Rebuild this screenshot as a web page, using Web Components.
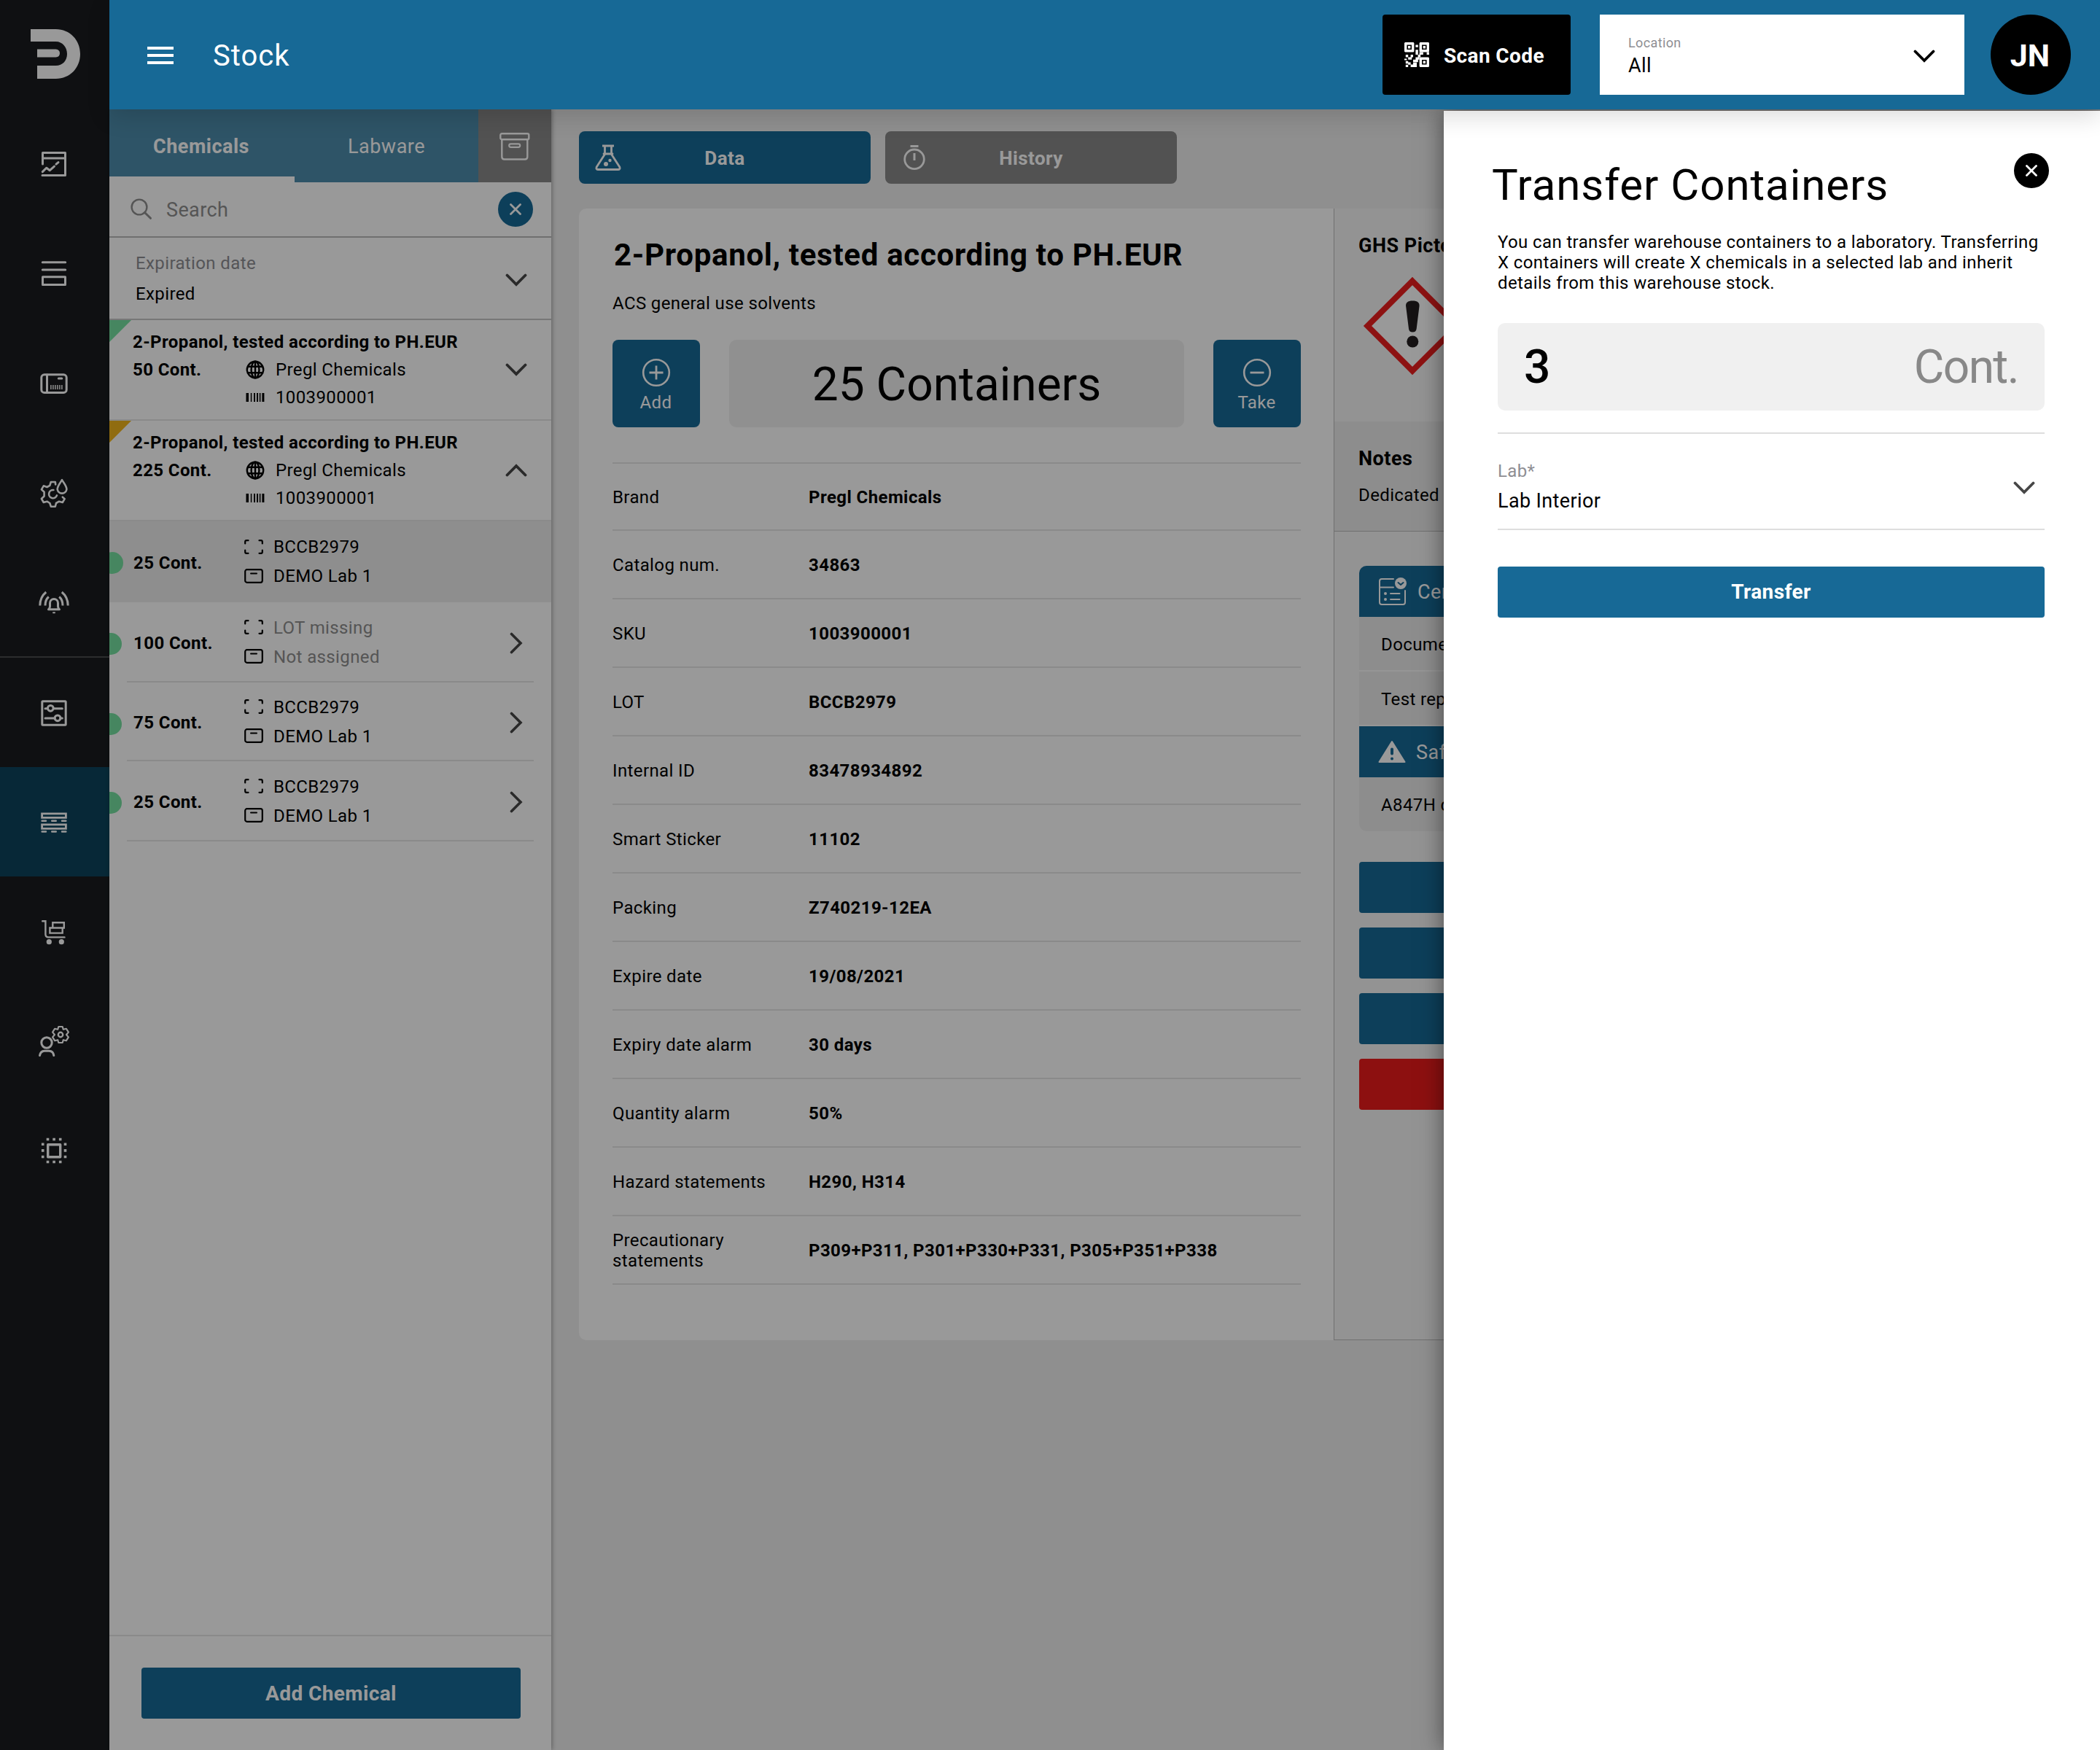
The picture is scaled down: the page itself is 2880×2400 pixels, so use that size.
<!DOCTYPE html>
<html lang="en">
<head>
<meta charset="utf-8">
<title>Stock</title>
<style>
   html, body {
      margin: 0;
      height: 100%;
   }
   body {
      --blue: #176996;
      --grey: #898989;
      --muted: #8e8e8e;
      --line: #e6e6e6;
      font-family: Roboto, "Liberation Sans", sans-serif;
      font-size: 24px;
      letter-spacing: 0.38px;
      color: #000;
      overflow: hidden;
   }
</style>
</head>
<body>
<stock-app></stock-app>

<script>
const ICONS = {
   logo: [68, 68, `<path fill="currentColor" stroke="none" d="M0 0H34.5C54 0 68 15 68 34S54 68 34.5 68H9V50H34.5C44 50 50 43 50 34S44 17 34.5 17H0zM9 27.5H34.5Q40 28 40 33T34.5 38.5H9z"/>`],
   report: [48, 48, `<path d="M8.5 24V8.5H39.5V39.5H8M8.5 16H39.5M8.3 34.6L13.7 29.2L18.3 32.7L24.5 27.2M27 24.2L30 21.7"/>`],
   rows: [48, 48, `<path d="M8.3 8.7H39.7M8.3 19H39.7M8.5 28.8H39.5V39.5H8.5z"/>`],
   card: [48, 48, `<rect x="6.8" y="12.8" width="34.4" height="24.6" rx="4"/><path d="M14.5 13V37M30.3 18H34.8"/><path stroke-linecap="butt" stroke-width="6" stroke-dasharray="1.4 1.6" d="M19.2 30H36"/>`],
   gearDrop: [48, 48, `<path stroke-width="2.6" d="M26.2 13.5L25.8 10H19.8L18.3 14.8L14.5 17L9.8 15.3L6.9 20.3L10.6 23.8V29.5L6.9 33L9.8 38L14.5 36.7L18.3 39L19.8 43.7H25.8L27 39L31 36.7L35.8 38L38.7 33.2L35.8 30.7M23.4 21A5.6 5.6 0 1 0 28 28.4M35 7.2C33 11 28.7 15.5 28.7 20A6.4 6.4 0 0 0 41.4 20C41.4 15.5 37 11 35 7.2z"/>`],
   bell: [48, 48, `<path stroke-linecap="butt" d="M16.5 34.8Q18.5 33.5 18.5 30.5V26a5.5 5.5 0 0 1 11 0V30.5Q29.5 33.5 31.5 34.8zM13.2 11Q4.8 18 4.8 29.5M16.8 17.5Q12 21.5 12 29.5M34.8 11Q43.2 18 43.2 29.5M31.2 17.5Q36 21.5 36 29.5"/><path stroke-width="2" d="M23 39.3H25"/>`],
   sliders: [48, 48, `<rect x="7.8" y="8.8" width="32.4" height="32.4" rx="1"/><path d="M12 18.7H15M23.5 18.7H35.3M12 32H25M33 32H35.3"/><circle cx="19.3" cy="18.3" r="3.9"/><circle cx="29" cy="31.8" r="3.9"/>`],
   pallets: [48, 48, `<path stroke-linejoin="miter" stroke-width="2.8" d="M7.6 12.8H40.4V18.4H7.6zM7.6 27.8H40.4V33.4H7.6z"/><path stroke-width="2.4" d="M7.6 22.7H13M21.2 22.7H26.8M35 22.7H40.4M7.6 37.5H13M21.2 37.5H26.8M35 37.5H40.4"/>`],
   cart: [48, 48, `<path stroke-width="2.4" stroke-linejoin="miter" d="M8.2 10.2H12.4V28.5Q12.6 32.3 16.5 32.4H38.5M22.3 18.8V12.3H37.8V19.5H36.5M18.4 19.5H35.7V26.6H18.4z"/><circle cx="17.3" cy="38.7" r="3.6" fill="currentColor" stroke="none"/><circle cx="34.3" cy="38.7" r="3.6" fill="currentColor" stroke="none"/>`],
   userGear: [48, 48, `<circle cx="14" cy="27" r="7.2"/><path d="M4.5 44.5Q5.5 38.5 11 38.2H17.3Q23 38.5 23.8 44.5"/><circle cx="33" cy="16" r="3.2" stroke-width="2.4"/><path stroke-width="2.2" d="M30.3 5H35.7L36.8 8.8L40.9 7.8L43.9 12.6L41 16L43.9 19.4L40.9 24.2L36.8 23.2L35.7 27H30.3L29.2 23.2L25.1 24.2L22.1 19.4L25 16L22.1 12.6L25.1 7.8L29.2 8.8z"/>`],
   chip: [48, 48, `<rect x="15.7" y="16.7" width="17" height="17" stroke-width="3.4"/><path stroke-width="3.6" stroke-linecap="butt" stroke-dasharray="3.6 5" d="M13.7 9.5H36M13.7 40.5H36M8.7 14.5V37M39.5 14.5V37"/>`],
   menu: [36, 24, `<path stroke-width="4" stroke-linecap="butt" d="M0 2H36M0 12H36M0 22H36"/>`],
   qr: [34, 34, `<g fill="currentColor" stroke="none"><path fill-rule="evenodd" d="M1 0H12.4L13.4 1V12.4L12.4 13.4H1L0 12.4V1zM3.4 3.4V10H10V3.4zM5 5H8.4V8.4H5zM21.6 0H33L34 1V12.4L33 13.4H21.6L20.6 12.4V1zM24 3.4V10H30.6V3.4zM25.6 5H29V8.4H25.6zM21.6 20.6H33L34 21.6V33L33 34H21.6L20.6 33V21.6zM24 24V30.6H30.6V24zM25.6 25.6H29V29H25.6z"/><path d="M15.4 3.4h3.4v3.4h-3.4zM15.4 10.2h3.4v6.8h-3.4zM20.6 13.6h5.2v3.4h-5.2zM30.6 13.4h3.4v3.6h-3.4zM1.8 17h3.4v3.4h-3.4zM8.6 17h3.4v3.4h-3.4zM5.2 20.4h5v3.4h-5zM0 22.6h3.4v2h-3.4zM15.4 20.4h5.2v3.4h-1.8v3.4h-3.4zM12 23.8h3.4v3.4h-3.4zM18.6 17h3.6v3.6h-3.6zM1.8 25.8h3.4v3.4h-3.4zM5.2 27.4h3.4v3.4h-3.4zM1.8 30.8h3.4v3.2h-3.4zM8.6 30.6h3.4v-2.8h5v6.2h-8.4z"/></g>`],
   archive: [42, 38, `<rect x="1.3" y="1.3" width="39" height="8" rx="2" stroke-width="2.4"/><path stroke-width="2.4" d="M3.3 9.5V33Q3.3 36.5 6.8 36.5H34.8Q38.3 36.5 38.3 33V9.5"/><rect x="13.2" y="15.3" width="15" height="4.6" rx="2.3" stroke-width="2.2"/>`],
   search: [30, 30, `<circle cx="12" cy="12" r="10.4" stroke-width="2.4"/><path stroke-width="3" d="M19.5 19.5L27.5 27.3"/>`],
   close: [16, 16, `<path stroke-width="2.8" d="M1.5 1.5L14.5 14.5M14.5 1.5L1.5 14.5"/>`],
   down: [30, 18, `<path stroke-width="3.8" stroke-linejoin="miter" d="M2.5 2.5L15 15L27.5 2.5"/>`],
   up: [30, 18, `<path stroke-width="3.8" stroke-linejoin="miter" d="M2.5 15.5L15 3L27.5 15.5"/>`],
   right: [18, 30, `<path stroke-width="3.6" stroke-linejoin="miter" d="M2.5 2.5L15 15L2.5 27.5"/>`],
   globe: [26, 26, `<g stroke-width="2.4"><circle cx="13" cy="13" r="11.2"/><ellipse cx="13" cy="13" rx="5.4" ry="11.2"/><path d="M13 2V24M3.5 8.8H22.5M3.5 17.2H22.5"/></g>`],
   barcode: [26, 12, `<path stroke="none" fill="currentColor" d="M.5 0h3.5v12H.5zM6.8 0h1.5v12H6.8zM11 0h2v12h-2zM15 0h2v12h-2zM18.8 0h1.6v12h-1.6zM22.4 0h3v12h-3z"/>`],
   lot: [26, 20, `<path stroke-width="2.2" d="M1.2 5.5V3Q1.2 1.2 3 1.2H5.5M20.5 1.2H23Q24.8 1.2 24.8 3V5.5M24.8 14.5V17Q24.8 18.8 23 18.8H20.5M5.5 18.8H3Q1.2 18.8 1.2 17V14.5"/>`],
   box: [26, 20, `<rect x="1.2" y="1.2" width="23.6" height="17.6" rx="2.5" stroke-width="2.2"/><path stroke-width="2" d="M9 6.5H17"/>`],
   flask: [36, 36, `<path stroke-width="3" stroke-linecap="butt" stroke-linejoin="miter" d="M10 2H26"/><path stroke-width="2.8" d="M13.5 3V13.5L2.2 31Q1 34.5 4.5 34.5H31.5Q35 34.5 33.8 31L22.5 13.5V3M12 13H24"/><circle cx="15" cy="27" r="3" fill="currentColor" stroke="none"/><circle cx="20.5" cy="22" r="2.2" fill="currentColor" stroke="none"/>`],
   timer: [30, 34, `<circle cx="15" cy="19.3" r="13.3" stroke-width="2.8"/><path stroke-width="3" stroke-linecap="butt" d="M9.5 1.5H20.5M15 11V21"/>`],
   plus: [40, 40, `<circle cx="20" cy="20" r="17.8" stroke-width="2.6"/><path stroke-width="2.8" stroke-linecap="butt" d="M20 10.5V29.5M10.5 20H29.5"/>`],
   minus: [40, 40, `<circle cx="20" cy="20" r="17.8" stroke-width="2.6"/><path stroke-width="2.8" stroke-linecap="butt" d="M10.5 20H29.5"/>`],
   irritant: [136, 136, `<path d="M68 6.5L129.5 68L68 129.5L6.5 68z" fill="#fff" stroke="#eb1e1e" stroke-width="8" stroke-linejoin="miter"/><path fill="#231f20" stroke="none" d="M68.3 33.5C75 33.5 78 36 77.5 41L73.6 72Q73 76.5 68.3 76.5T63 72L59.1 41C58.6 36 61.6 33.5 68.3 33.5z"/><circle cx="68.3" cy="89.5" r="8" fill="#231f20" stroke="none"/>`],
   certificate: [40, 40, `<g stroke-width="2"><path d="M21 3H5Q2 3 2 6V35Q2 38 5 38H34Q37 38 37 35V19M2 14.5H21M17 23H29.5M17 31H29.5"/></g><g fill="currentColor" stroke="none"><circle cx="10" cy="23" r="2"/><circle cx="10" cy="31" r="2"/><circle cx="31" cy="9" r="8"/></g><path d="M27.5 8L31 11L34.5 8" stroke="var(--blue)" stroke-width="2"/>`],
   warning: [38, 32, `<path fill="currentColor" stroke="currentColor" stroke-width="2" d="M19 2L36.5 30H1.5z"/><path stroke="var(--blue)" stroke-width="4" d="M19 12.5V18.5M19 25.5V25.6"/>`]
}

class AppIcon extends HTMLElement {
   connectedCallback() {
      const [w, h, body] = ICONS[this.getAttribute('name')]
      this.attachShadow({ mode: 'open' })
      this.shadowRoot.innerHTML = `
         <style>
            :host { display: block; flex: none; width: ${w}px; height: ${h}px; }
            svg { display: block; }
         </style>
         <svg width="${w}" height="${h}" viewBox="0 0 ${w} ${h}" fill="none" stroke="currentColor"
            stroke-width="3" stroke-linecap="round" stroke-linejoin="round">${body}</svg>
         `;
   }
}
customElements.define('app-icon', AppIcon)

class RoundButton extends HTMLElement {
   constructor() {
      super();
      this.attachShadow({ mode: 'open' })
      this.shadowRoot.innerHTML = `
         <style>
            :host {
               display: flex;
               align-items: center;
               justify-content: center;
               flex: none;
               width: 48px;
               height: 48px;
               border-radius: 50%;
               background: var(--blue);
               color: #fff;
            }
         </style>
         <app-icon name="close"></app-icon>
         `;
   }
}
customElements.define('round-button', RoundButton)

class AppButton extends HTMLElement {
   constructor() {
      super();
      this.attachShadow({ mode: 'open' })
      this.shadowRoot.innerHTML = `
         <style>
            :host {
               display: flex;
               align-items: center;
               justify-content: center;
               box-sizing: border-box;
               height: 70px;
               border-radius: 4px;
               background: var(--blue);
               color: #fff;
               font-size: 28px;
               font-weight: 700;
               letter-spacing: 0.4px;
            }
            :host([danger]) { background: #eb1b1b; }
         </style>
         <slot></slot>
         `;
   }
}
customElements.define('app-button', AppButton)

class AppSidebar extends HTMLElement {
   constructor() {
      super();
      const link = (name) => `<a class="${name === 'pallets' ? 'active' : ''}"><app-icon name="${name}"></app-icon></a>`
      this.attachShadow({ mode: 'open' })
      this.shadowRoot.innerHTML = `
         <style>
            :host {
               display: block;
               background: #191c1f;
               color: #fff;
            }
            .logo {
               box-sizing: border-box;
               height: 150px;
               padding: 40px 0 0 42px;
            }
            a {
               display: flex;
               align-items: center;
               justify-content: center;
               height: 150px;
               padding-right: 2px;
            }
            a.active { background: #0c445c; }
            nav + nav { border-top: 2px solid #4a4c4e; }
         </style>
         <div class="logo"><app-icon name="logo"></app-icon></div>
         <nav>${['report', 'rows', 'card', 'gearDrop', 'bell'].map(link).join('')}</nav>
         <nav>${['sliders', 'pallets', 'cart', 'userGear', 'chip'].map(link).join('')}</nav>
         `;
   }
}
customElements.define('app-sidebar', AppSidebar)

class AppTopbar extends HTMLElement {
   constructor() {
      super();
      this.attachShadow({ mode: 'open' })
      this.shadowRoot.innerHTML = `
         <style>
            :host {
               display: flex;
               align-items: center;
               box-sizing: border-box;
               height: 150px;
               padding: 0 40px 0 52px;
               background: var(--blue);
               color: #fff;
               box-shadow: 0 10px 30px rgba(0, 0, 0, 0.14);
            }
            app-icon[name="menu"] { margin-top: 2px; }
            h1 {
               flex: 1;
               margin: 2px 0 0 54px;
               font-size: 40px;
               font-weight: 400;
               letter-spacing: 1px;
            }
            .scan {
               display: flex;
               align-items: center;
               box-sizing: border-box;
               width: 258px;
               height: 110px;
               padding-left: 30px;
               gap: 20px;
               border-radius: 4px;
               background: #000;
               font-size: 28px;
               font-weight: 700;
            }
            .scan span { padding-top: 2px; }
            .location {
               display: flex;
               align-items: center;
               justify-content: space-between;
               box-sizing: border-box;
               width: 500px;
               height: 110px;
               margin: 0 36px 0 40px;
               padding: 0 40px 0 39px;
               background: #fff;
               color: #000;
               font-size: 27px;
               line-height: 32px;
            }
            small {
               display: block;
               padding-bottom: 1px;
               font-size: 18px;
               line-height: 29px;
               color: #8e8e93;
            }
            .location app-icon { margin-top: 4px; }
            .avatar {
               display: flex;
               align-items: center;
               justify-content: center;
               box-sizing: border-box;
               width: 110px;
               height: 110px;
               padding: 2px 2px 0 0;
               border-radius: 50%;
               background: #000;
               font-size: 43px;
               font-weight: 700;
               letter-spacing: 0;
            }
         </style>
         <app-icon name="menu"></app-icon>
         <h1>Stock</h1>
         <div class="scan"><app-icon name="qr"></app-icon><span>Scan Code</span></div>
         <div class="location">
            <div><small>Location</small>All</div>
            <app-icon name="down"></app-icon>
         </div>
         <div class="avatar">JN</div>
         `;
   }
}
customElements.define('app-topbar', AppTopbar)

class StockItem extends HTMLElement {
   connectedCallback() {
      this.attachShadow({ mode: 'open' })
      this.shadowRoot.innerHTML = `
         <style>
            :host {
               display: grid;
               grid-template-columns: 155px 41px 1fr 30px;
               grid-auto-rows: 38px;
               align-items: center;
               box-sizing: border-box;
               height: 138px;
               padding: 11px 33px 11px 32px;
               border-bottom: 2px solid var(--line);
               background: linear-gradient(135deg, var(--flag) 21px, transparent 21.5px);
            }
            .name { grid-column: 1 / 5; letter-spacing: 0.41px; }
            .id { grid-column: 3; }
            .code { grid-column: 2; }
            .arrow { color: #474747; }
         </style>
         <b class="name"><slot></slot></b>
         <b>${this.getAttribute('amount')}</b>
         <app-icon name="globe"></app-icon>
         <span>Pregl Chemicals</span>
         <app-icon class="arrow" name="${this.hasAttribute('open') ? 'up' : 'down'}"></app-icon>
         <app-icon class="code" name="barcode"></app-icon>
         <span class="id">1003900001</span>
         `;
      this.style.setProperty('--flag', this.getAttribute('flag'))
   }
}
customElements.define('stock-item', StockItem)

class StockBatch extends HTMLElement {
   connectedCallback() {
      this.attachShadow({ mode: 'open' })
      this.shadowRoot.innerHTML = `
         <style>
            :host {
               display: block;
               position: relative;
               overflow: hidden;
               height: 110px;
            }
            :host([selected]) { background: #ededed; height: 111px; }
            :host([short]) { height: 108px; }
            :host::before {
               content: '';
               position: absolute;
               left: -13px;
               top: 42px;
               width: 30px;
               height: 30px;
               border-radius: 50%;
               background: #76dfa0;
            }
            :host([selected])::before { left: -11px; }
            .row {
               display: grid;
               grid-template-columns: 152px 40px 1fr 24px;
               align-items: center;
               box-sizing: border-box;
               height: 100%;
               margin: 0 24px;
               padding: 0 9px 0 9px;
               border-bottom: 2px solid var(--line);
            }
            :host([selected]) .row { border-color: transparent; }
            b { padding-top: 4px; letter-spacing: 0.42px; }
            .cell {
               display: grid;
               grid-auto-rows: 40px;
               align-items: center;
            }
            .text { padding-top: 1px; }
            :host([empty]) .text { color: var(--muted); }
            .arrow { color: #474747; margin-top: 4px; }
         </style>
         <div class="row">
            <b>${this.getAttribute('amount')}</b>
            <div class="cell"><app-icon name="lot"></app-icon><app-icon name="box"></app-icon></div>
            <div class="cell text">
               <span>${this.getAttribute('lot')}</span>
               <span>${this.getAttribute('place')}</span>
            </div>
            ${this.hasAttribute('selected') ? '' : '<app-icon class="arrow" name="right"></app-icon>'}
         </div>
         `;
   }
}
customElements.define('stock-batch', StockBatch)

class StockList extends HTMLElement {
   constructor() {
      super();
      this.attachShadow({ mode: 'open' })
      this.shadowRoot.innerHTML = `
         <style>
            :host {
               display: flex;
               flex-direction: column;
               position: relative;
               background: #fff;
               box-shadow: 1px 0 6px rgba(0, 0, 0, 0.35);
            }
            .tabs {
               display: grid;
               grid-template-columns: 254px 252px 100px;
               height: 100px;
               color: #fff;
               font-size: 27px;
               letter-spacing: 0.5px;
            }
            .tabs div {
               display: flex;
               align-items: center;
               justify-content: center;
               box-sizing: border-box;
               padding-top: 2px;
               background: #4e8cac;
            }
            .tabs .current {
               padding: 9px 2px 0 0;
               border-bottom: 8px solid #fff;
               font-weight: 700;
            }
            .tabs .archive { background: var(--grey); }
            .search {
               display: flex;
               align-items: center;
               box-sizing: border-box;
               height: 76px;
               padding: 0 25px 0 29px;
               border-bottom: 2px solid #bbb;
               color: var(--muted);
               font-size: 27px;
            }
            .search span { flex: 1; margin: 2px 0 0 19px; }
            .filter {
               display: flex;
               align-items: center;
               justify-content: space-between;
               box-sizing: border-box;
               height: 113px;
               padding: 0 33px 0 36px;
               border-bottom: 2px solid #c6c6c6;
               line-height: 42px;
            }
            .filter small { display: block; font-size: 24px; color: #8e8e93; }
            .filter app-icon { color: #474747; margin-top: 4px; }
            footer {
               margin-top: auto;
               padding: 43px 42px 43px 44px;
               border-top: 2px solid var(--line);
            }
         </style>
         <div class="tabs">
            <div class="current">Chemicals</div>
            <div>Labware</div>
            <div class="archive"><app-icon name="archive"></app-icon></div>
         </div>
         <div class="search"><app-icon name="search"></app-icon><span>Search</span><round-button></round-button></div>
         <div class="filter">
            <div><small>Expiration date</small>Expired</div>
            <app-icon name="down"></app-icon>
         </div>
         <stock-item flag="#76dfa0" amount="50 Cont.">2-Propanol, tested according to PH.EUR</stock-item>
         <stock-item flag="#f0b51c" amount="225 Cont." open>2-Propanol, tested according to PH.EUR</stock-item>
         <stock-batch amount="25 Cont." lot="BCCB2979" place="DEMO Lab 1" selected></stock-batch>
         <stock-batch amount="100 Cont." lot="LOT missing" place="Not assigned" empty></stock-batch>
         <stock-batch amount="75 Cont." lot="BCCB2979" place="DEMO Lab 1" short></stock-batch>
         <stock-batch amount="25 Cont." lot="BCCB2979" place="DEMO Lab 1"></stock-batch>
         <footer><app-button>Add Chemical</app-button></footer>
         `;
   }
}
customElements.define('stock-list', StockList)

class ViewTab extends HTMLElement {
   connectedCallback() {
      this.attachShadow({ mode: 'open' })
      this.shadowRoot.innerHTML = `
         <style>
            :host {
               display: grid;
               grid-template-columns: 60px 1fr 60px;
               align-items: center;
               width: 400px;
               height: 72px;
               border-radius: 8px;
               background: var(--grey);
               color: #fff;
               font-size: 26px;
               font-weight: 700;
               text-align: center;
               letter-spacing: 0.45px;
            }
            :host([current]) { background: var(--blue); }
            app-icon { justify-self: center; margin-left: 20px; }
            span { padding-top: 1px; }
         </style>
         <app-icon name="${this.getAttribute('icon')}"></app-icon>
         <span><slot></slot></span>
         `;
   }
}
customElements.define('view-tab', ViewTab)

class AmountButton extends HTMLElement {
   connectedCallback() {
      this.attachShadow({ mode: 'open' })
      this.shadowRoot.innerHTML = `
         <style>
            :host {
               display: flex;
               flex-direction: column;
               align-items: center;
               box-sizing: border-box;
               width: 120px;
               height: 120px;
               padding: 25px 1px 0 0;
               border-radius: 8px;
               background: var(--blue);
               color: #fff;
               line-height: 42px;
            }
         </style>
         <app-icon name="${this.getAttribute('icon')}"></app-icon>
         <slot></slot>
         `;
   }
}
customElements.define('amount-button', AmountButton)

class DataRow extends HTMLElement {
   connectedCallback() {
      this.attachShadow({ mode: 'open' })
      this.shadowRoot.innerHTML = `
         <style>
            :host {
               display: grid;
               grid-template-columns: 269px 1fr;
               align-items: center;
               box-sizing: border-box;
               height: 94px;
               padding-top: 2px;
               border-bottom: 2px solid var(--line);
               line-height: 28px;
            }
            span { max-width: 230px; }
            b { letter-spacing: 0.42px; }
         </style>
         <span>${this.getAttribute('label')}</span>
         <b><slot></slot></b>
         `;
   }
}
customElements.define('data-row', DataRow)

class ChemicalData extends HTMLElement {
   constructor() {
      super();
      this.attachShadow({ mode: 'open' })
      this.shadowRoot.innerHTML = `
         <style>
            :host {
               display: block;
               box-sizing: border-box;
               padding: 39px 45px 0 46px;
               background: #fff;
            }
            h2 {
               margin: 0 0 26px 2px;
               font-size: 42px;
               line-height: 50px;
               letter-spacing: 0.7px;
            }
            p { margin: 0 0 35px; line-height: 30px; }
            .amount {
               display: flex;
               justify-content: space-between;
               width: 944px;
               margin-bottom: 48px;
            }
            output {
               display: flex;
               align-items: center;
               justify-content: center;
               box-sizing: border-box;
               width: 624px;
               padding-top: 2px;
               border-radius: 10px;
               background: #f0f0f0;
               font-size: 64px;
               letter-spacing: 0;
            }
            .data { width: 944px; border-top: 2px solid var(--line); }
            data-row:first-child { height: 92px; }
         </style>
         <h2>2-Propanol, tested according to PH.EUR</h2>
         <p>ACS general use solvents</p>
         <div class="amount">
            <amount-button icon="plus">Add</amount-button>
            <output>25 Containers</output>
            <amount-button icon="minus">Take</amount-button>
         </div>
         <div class="data">
            <data-row label="Brand">Pregl Chemicals</data-row>
            <data-row label="Catalog num.">34863</data-row>
            <data-row label="SKU">1003900001</data-row>
            <data-row label="LOT">BCCB2979</data-row>
            <data-row label="Internal ID">83478934892</data-row>
            <data-row label="Smart Sticker">11102</data-row>
            <data-row label="Packing">Z740219-12EA</data-row>
            <data-row label="Expire date">19/08/2021</data-row>
            <data-row label="Expiry date alarm">30 days</data-row>
            <data-row label="Quantity alarm">50%</data-row>
            <data-row label="Hazard statements">H290, H314</data-row>
            <data-row label="Precautionary statements">P309+P311, P301+P330+P331, P305+P351+P338</data-row>
         </div>
         `;
   }
}
customElements.define('chemical-data', ChemicalData)

class ChemicalInfo extends HTMLElement {
   constructor() {
      super();
      this.attachShadow({ mode: 'open' })
      this.shadowRoot.innerHTML = `
         <style>
            :host {
               display: block;
               box-sizing: border-box;
               border-left: 1px solid #bbb;
               border-bottom: 1px solid #bbb;
               background: #f6f6f6;
               white-space: nowrap;
            }
            h3 { margin: 0; font-size: 27px; line-height: 30px; letter-spacing: 0.5px; }
            .ghs { height: 256px; padding: 36px 0 0 33px; }
            .ghs app-icon { margin: 27px 0 0 6px; }
            .notes {
               box-sizing: border-box;
               height: 151px;
               padding: 36px 0 0 33px;
               border-bottom: 1px solid #bbb;
               background: #ececec;
            }
            p { margin: 19px 0 0; line-height: 32px; }
            .docs {
               margin: 47px 34px 42px;
               border-radius: 10px;
               background: #ececec;
               overflow: hidden;
            }
            .docs header {
               display: flex;
               align-items: center;
               box-sizing: border-box;
               height: 70px;
               padding-left: 26px;
               gap: 14px;
               background: var(--blue);
               color: #fff;
               font-size: 27px;
            }
            .docs span { padding-top: 2px; }
            .docs div {
               box-sizing: border-box;
               height: 75px;
               padding-left: 30px;
               border-bottom: 2px solid #f8f8f8;
               line-height: 77px;
            }
            .docs div:last-child { border: 0; height: 74px; }
            app-button { margin: 0 34px 20px; }
         </style>
         <section class="ghs">
            <h3>GHS Pictograms</h3>
            <app-icon name="irritant"></app-icon>
         </section>
         <section class="notes">
            <h3>Notes</h3>
            <p>Dedicated</p>
         </section>
         <section class="docs">
            <header><app-icon name="certificate"></app-icon><span>Certificates</span></header>
            <div>Documents</div>
            <div>Test report</div>
            <header><app-icon name="warning"></app-icon><span>Safety</span></header>
            <div>A847H data</div>
         </section>
         <app-button></app-button>
         <app-button></app-button>
         <app-button></app-button>
         <app-button danger></app-button>
         `;
   }
}
customElements.define('chemical-info', ChemicalInfo)

class TransferDrawer extends HTMLElement {
   constructor() {
      super();
      this.attachShadow({ mode: 'open' })
      this.shadowRoot.innerHTML = `
         <style>
            :host {
               display: block;
               box-sizing: border-box;
               padding: 58px 76px 0 74px;
               background: #fff;
               box-shadow: 0 0 30px rgba(0, 0, 0, 0.5);
            }
            header {
               display: flex;
               justify-content: space-between;
               margin: 0 -6px 0 -8px;
            }
            h2 {
               margin: 6px 0 0;
               font-size: 60px;
               font-weight: 400;
               line-height: 76px;
               letter-spacing: 0.95px;
            }
            round-button { background: #000; }
            p { margin: 26px 0 41px; line-height: 28px; }
            .amount {
               display: flex;
               align-items: center;
               justify-content: space-between;
               box-sizing: border-box;
               height: 120px;
               padding: 0 36px;
               border-radius: 10px;
               background: #f0f0f0;
               font-size: 64px;
               letter-spacing: 0;
            }
            .amount b { font-weight: 500; }
            .amount span { color: #888; letter-spacing: -1.6px; }
            .lab {
               display: flex;
               align-items: center;
               justify-content: space-between;
               box-sizing: border-box;
               height: 134px;
               margin: 30px 0 50px;
               padding-right: 13px;
               border: solid #dedede;
               border-width: 2px 0;
               font-size: 27px;
               line-height: 40px;
            }
            .lab small { display: block; padding-bottom: 1px; font-size: 24px; color: #8e8e93; }
            .lab div { margin-top: 13px; }
            .lab app-icon { margin-top: 18px; color: #474747; }
            app-button { padding-bottom: 1px; }
         </style>
         <header><h2>Transfer Containers</h2><round-button></round-button></header>
         <p>You can transfer warehouse containers to a laboratory. Transferring<br>
            X containers will create X chemicals in a selected lab and inherit<br>
            details from this warehouse stock.</p>
         <div class="amount"><b>3</b><span>Cont.</span></div>
         <div class="lab">
            <div><small>Lab*</small>Lab Interior</div>
            <app-icon name="down"></app-icon>
         </div>
         <app-button>Transfer</app-button>
         `;
   }
}
customElements.define('transfer-drawer', TransferDrawer)

class StockApp extends HTMLElement {
   constructor() {
      super();
      this.attachShadow({ mode: 'open' })
      this.shadowRoot.innerHTML = `
         <style>
            :host {
               display: grid;
               grid-template-columns: 150px 606px 1fr;
               grid-template-rows: 150px 1fr;
               position: relative;
               width: 2880px;
               height: 2400px;
               overflow: hidden;
               background: #efefef;
            }
            app-sidebar { grid-row: 1 / 3; }
            app-topbar { grid-column: 2 / 4; grid-row: 1; z-index: 4; }
            stock-list { grid-column: 2; grid-row: 2; }
            main { grid-column: 3; grid-row: 2; padding: 30px 38px 0; }
            .views { display: flex; gap: 20px; margin-bottom: 34px; }
            .card {
               display: grid;
               grid-template-columns: 1035px 1fr;
               height: 1552px;
               border-radius: 10px;
               overflow: hidden;
            }
            /* the open drawer dims everything except the top bar */
            .scrim {
               position: absolute;
               inset: 0;
               z-index: 2;
               background: rgba(0, 0, 0, 0.4);
            }
            transfer-drawer {
               position: absolute;
               top: 152px;
               right: 0;
               bottom: 0;
               width: 900px;
               z-index: 3;
            }
         </style>
         <app-sidebar></app-sidebar>
         <app-topbar></app-topbar>
         <stock-list></stock-list>
         <main>
            <div class="views">
               <view-tab icon="flask" current>Data</view-tab>
               <view-tab icon="timer">History</view-tab>
            </div>
            <div class="card">
               <chemical-data></chemical-data>
               <chemical-info></chemical-info>
            </div>
         </main>
         <div class="scrim"></div>
         <transfer-drawer></transfer-drawer>
         `;
   }
}
customElements.define('stock-app', StockApp)
</script>
</body>
</html>
